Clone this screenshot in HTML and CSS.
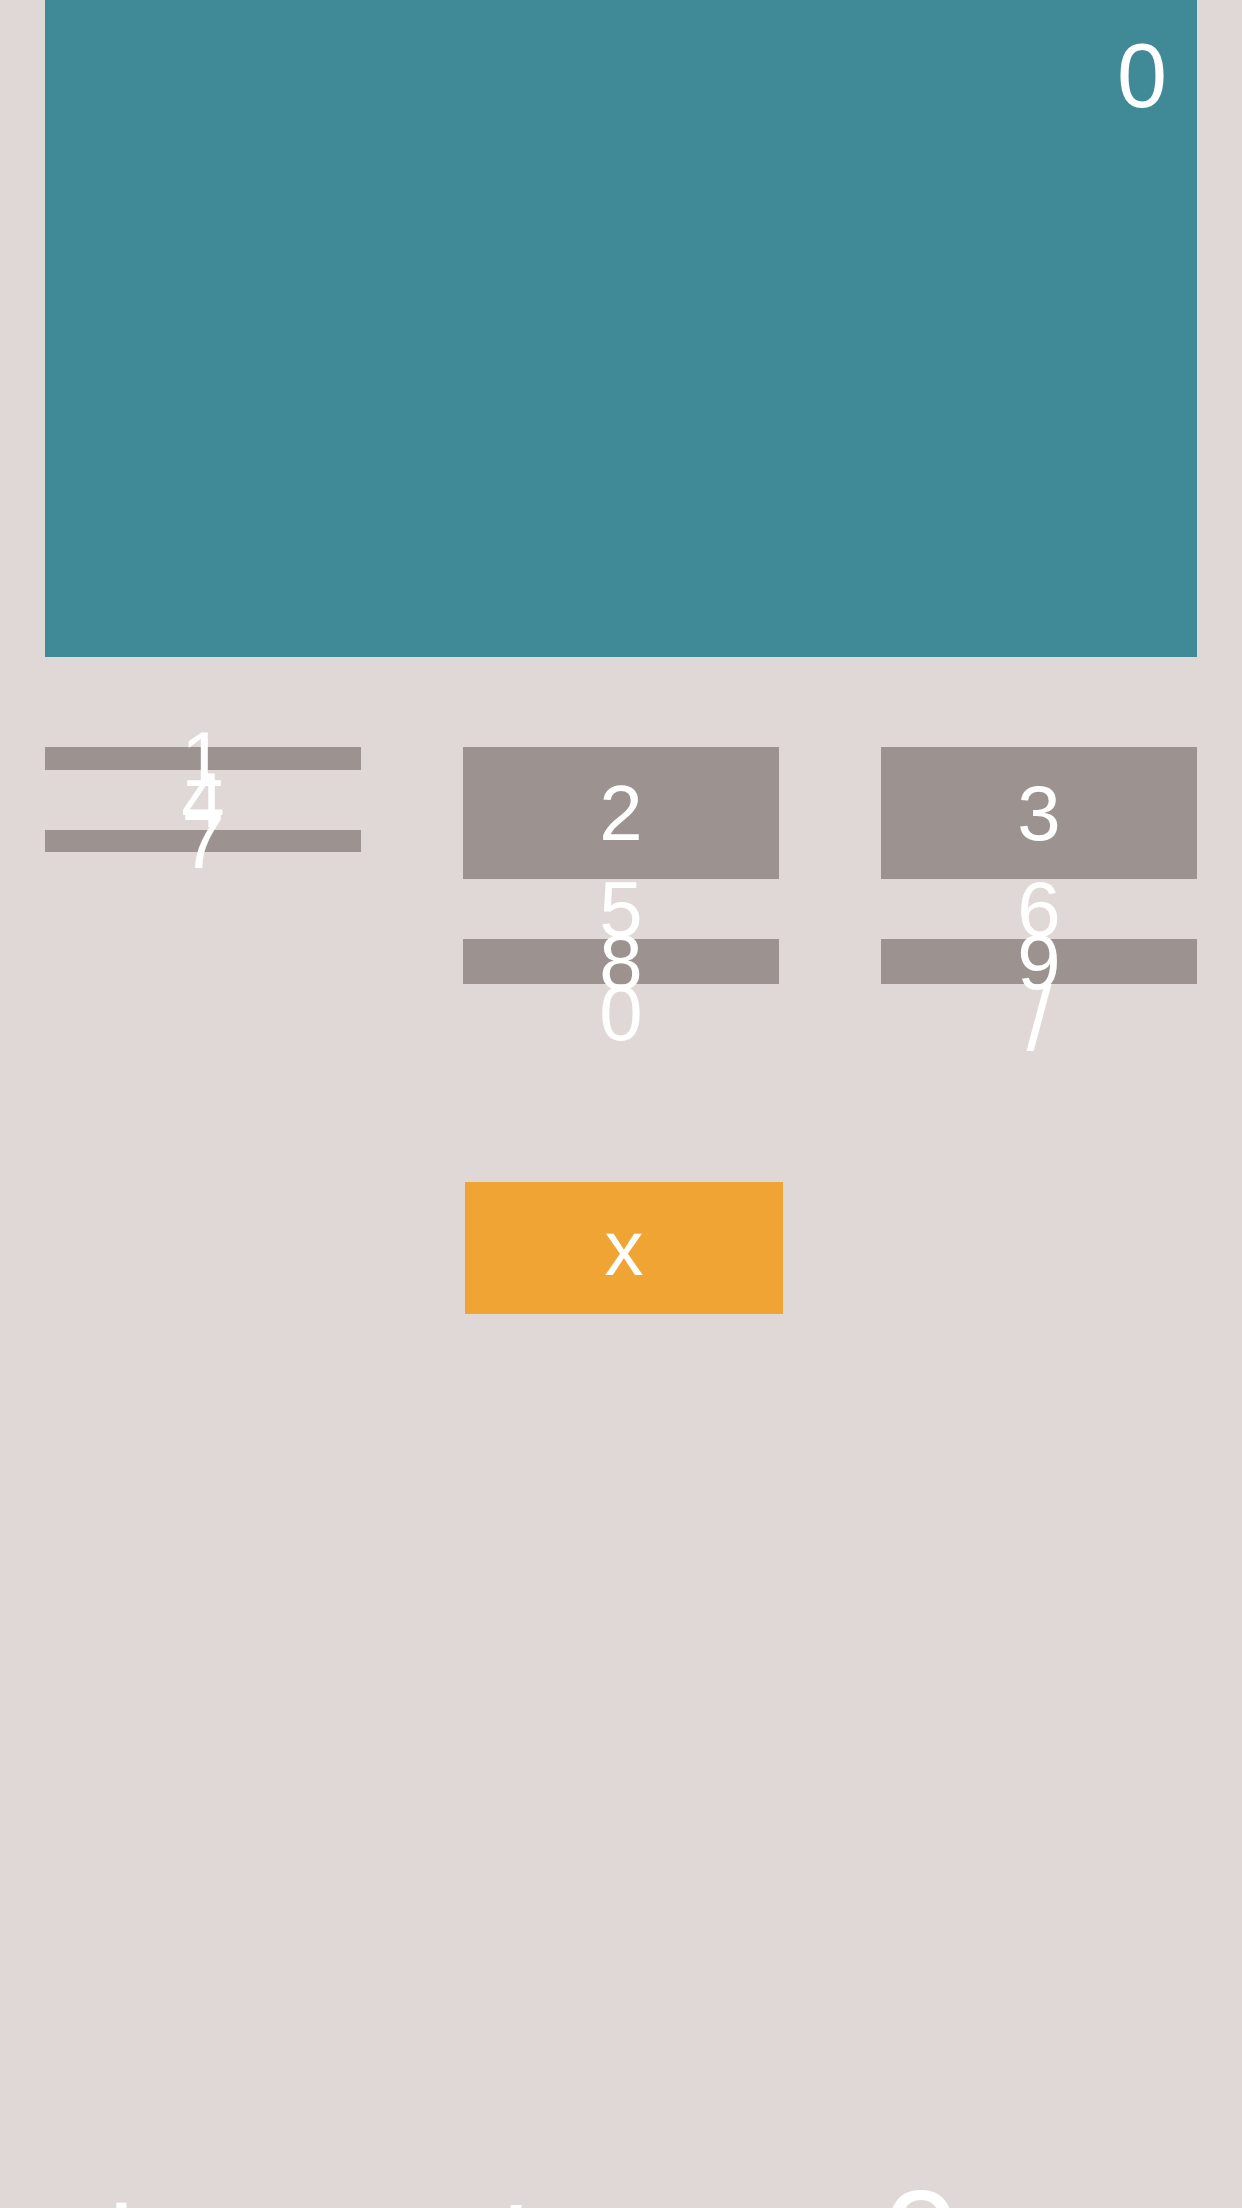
FILE: index.html
```html
<!DOCTYPE html>
<html lang="en">
<head>
<meta charset="utf-8">
<title>Calculator</title>
<link rel="stylesheet" href="styles.css">
</head>
<body>
<div class="calc">
  <div class="display"><span class="value">0</span></div>

  <div class="keypad">
    <div class="col">
      <div class="key fill h-a"><span>1</span></div>
      <div class="key h-b"><span>4</span></div>
      <div class="key fill h-c"><span>7</span></div>
    </div>
    <div class="col">
      <div class="key fill h-full"><span>2</span></div>
      <div class="key h-b"><span>5</span></div>
      <div class="key fill h-d"><span>8</span></div>
      <div class="key h-e"><span>0</span></div>
    </div>
    <div class="col">
      <div class="key fill h-full"><span>3</span></div>
      <div class="key h-b"><span>6</span></div>
      <div class="key fill h-d"><span>9</span></div>
      <div class="key h-e slash"><span>/</span></div>
    </div>
  </div>

  <div class="op-row">
    <div class="key op"><span>x</span></div>
  </div>
</div>

<div class="bottom-row">
  <div class="big b1">+</div>
  <div class="big b2">/</div>
  <div class="big b3">0</div>
</div>
</body>
</html>
```

FILE: styles.css
```css
html, body {
  margin: 0;
  padding: 0;
  height: 2208px;
  overflow: hidden;
}

body {
  background: #e0d8d7;
  font-family: "Liberation Sans", Arial, sans-serif;
  color: #ffffff;
}

.calc {
  padding: 0 45px;
}

.display {
  height: 657px;
  background: #408996;
  box-sizing: border-box;
  padding: 31px 30px 0 0;
  text-align: right;
}

.display .value {
  font-size: 90px;
  line-height: 1;
  display: inline-block;
}

.keypad {
  margin-top: 90px;
  display: grid;
  grid-template-columns: 316px 316px 316px;
  column-gap: 102px;
  align-items: start;
}

.col {
  display: flex;
  flex-direction: column;
}

.key {
  display: flex;
  align-items: center;
  justify-content: center;
  font-size: 78px;
  line-height: 1;
}

.key span {
  display: block;
  line-height: 1;
}

.slash span {
  font-size: 90px;
  padding-top: 12px;
}

.fill {
  background: #9c9391;
}

.h-a { height: 23px; }
.h-b { height: 60px; }
.h-c { height: 22px; }
.h-d { height: 45px; }
.h-e { height: 58px; }
.h-full { height: 132px; }

.op-row {
  margin-top: 140px;
  display: flex;
  padding-left: 420px;
}

.op {
  width: 318px;
  height: 132px;
  background: #f0a434;
}

.bottom-row {
  margin-top: 851px;
  display: flex;
  align-items: flex-start;
}

.big {
  font-size: 140px;
  line-height: 1;
  text-align: center;
}

.b1 { width: 243px; }
.b2 { width: 519px; margin-top: 23px; }
.b3 { width: 318px; margin-top: 5px; }
```
